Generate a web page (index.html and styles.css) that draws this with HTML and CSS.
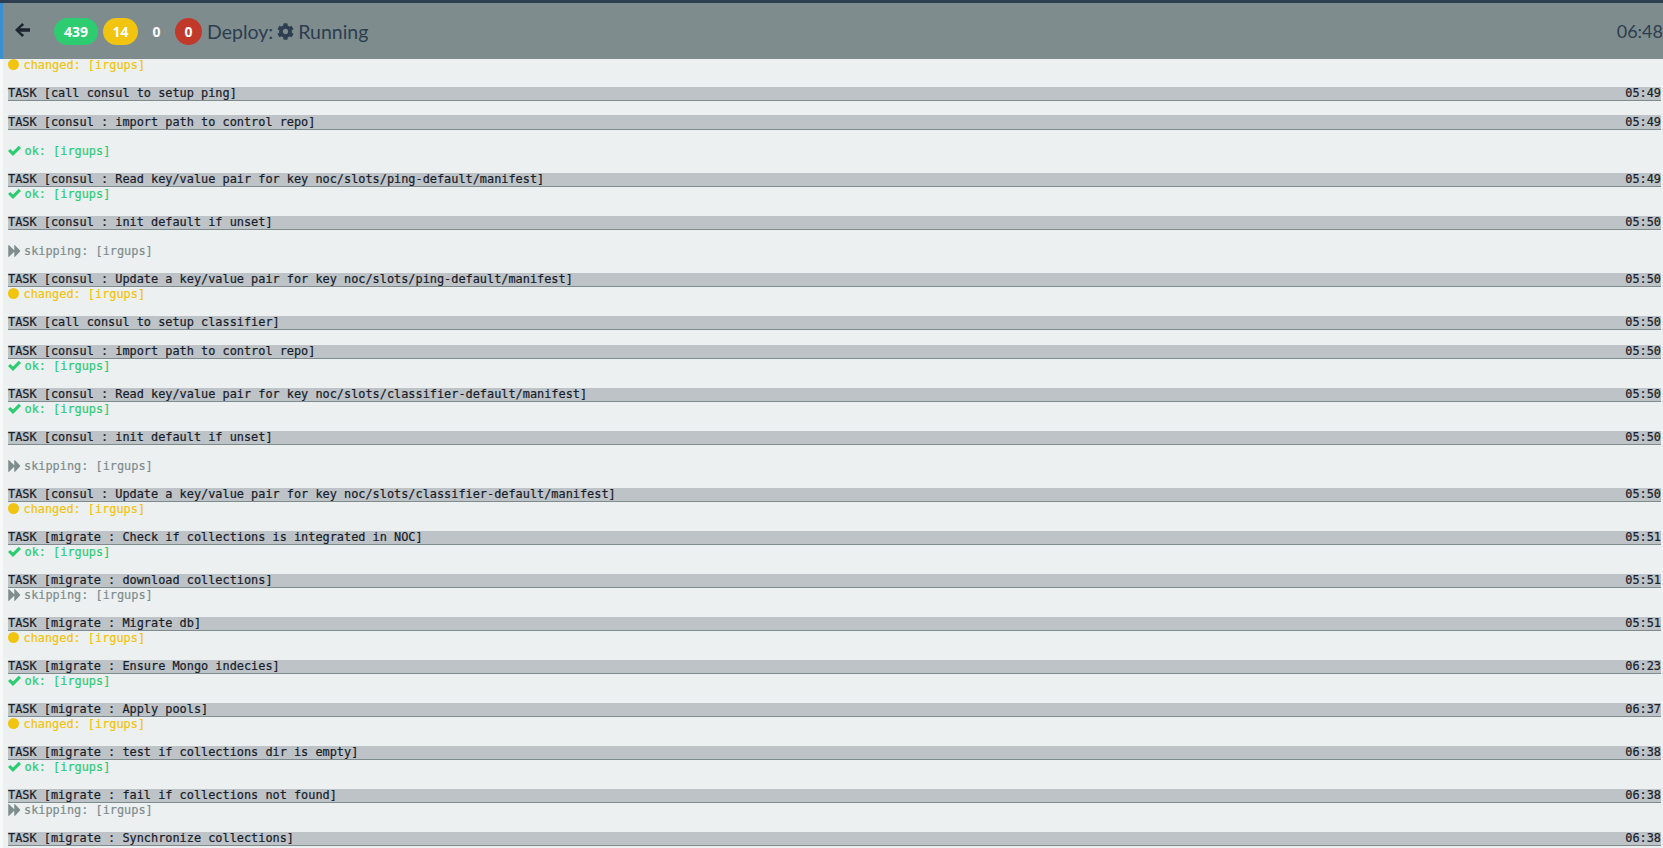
FILE: index.html
```html
<!DOCTYPE html>
<html lang="en">
<head>
<meta charset="utf-8">
<title>Deploy: Running</title>
<link rel="stylesheet" href="styles.css">
</head>
<body>
<svg class="sprite" aria-hidden="true">
<symbol id="i-check" viewBox="0 0 13 11"><path d="M0 6.1 2.2 3.9 5 6.6 10.8.8 13 3 5 11z"/></symbol>
<symbol id="i-forward" viewBox="0 0 12 12"><path d="M0 .6c0-.5.4-.7.8-.4L6 5.2V.6c0-.5.4-.7.8-.4l5 5.3c.3.3.3.7 0 1l-5 5.3c-.4.3-.8.1-.8-.4V6.8L.8 11.8c-.4.3-.8.1-.8-.4z"/></symbol>
</svg>
<header class="topbar">
  <a class="back" href="#" aria-label="Back">
    <svg class="back-icon" viewBox="0 0 15 14"><path d="M7.2 0 9.1 1.9 5 5.2H15V8.8H5L9.1 12.1 7.2 14 0 7z"/></svg>
  </a>
  <div class="badges">
    <span class="badge badge-ok">439</span>
    <span class="badge badge-changed">14</span>
    <span class="badge badge-plain">0</span>
    <span class="badge badge-failed">0</span>
  </div>
  <div class="title">
    <span>Deploy:</span>
    <svg class="gear" viewBox="0 0 512 512"><path d="M487.4 315.7l-42.6-24.6c4.3-23.2 4.3-47 0-70.2l42.6-24.6c4.9-2.8 7.1-8.6 5.5-14-11.1-35.6-30-67.8-54.7-94.6-3.8-4.1-10-5.1-14.8-2.3L380.8 110c-17.9-15.4-38.5-27.3-60.8-35.1V25.8c0-5.6-3.9-10.5-9.4-11.7-36.7-8.2-74.3-7.8-109.2 0-5.5 1.2-9.4 6.1-9.4 11.7V75c-22.2 7.9-42.8 19.8-60.8 35.1L88.7 85.5c-4.9-2.8-11-1.9-14.8 2.3-24.7 26.7-43.6 58.9-54.7 94.6-1.7 5.4.6 11.2 5.5 14L67.3 221c-4.3 23.2-4.3 47 0 70.2l-42.6 24.6c-4.9 2.8-7.1 8.6-5.5 14 11.1 35.6 30 67.8 54.7 94.6 3.8 4.1 10 5.1 14.8 2.3l42.6-24.6c17.9 15.4 38.5 27.3 60.8 35.1v49.2c0 5.6 3.9 10.5 9.4 11.7 36.7 8.2 74.3 7.8 109.2 0 5.5-1.2 9.4-6.1 9.4-11.7v-49.2c22.2-7.9 42.8-19.8 60.8-35.1l42.6 24.6c4.9 2.8 11 1.9 14.8-2.3 24.7-26.7 43.6-58.9 54.7-94.6 1.5-5.5-.7-11.3-5.6-14.1zM256 336c-44.1 0-80-35.9-80-80s35.9-80 80-80 80 35.9 80 80-35.9 80-80 80z"/></svg>
    <span>Running</span>
  </div>
  <time class="clock">06:48</time>
</header>
<main class="log">
  <div class="line changed"><i class="dot"></i>changed: [irgups]</div>
  <div class="line"></div>
  <div class="line task"><span>TASK [call consul to setup ping]</span><span>05:49</span></div>
  <div class="line"></div>
  <div class="line task"><span>TASK [consul : import path to control repo]</span><span>05:49</span></div>
  <div class="line"></div>
  <div class="line ok"><svg class="ico"><use href="#i-check"/></svg>ok: [irgups]</div>
  <div class="line"></div>
  <div class="line task"><span>TASK [consul : Read key/value pair for key noc/slots/ping-default/manifest]</span><span>05:49</span></div>
  <div class="line ok"><svg class="ico"><use href="#i-check"/></svg>ok: [irgups]</div>
  <div class="line"></div>
  <div class="line task"><span>TASK [consul : init default if unset]</span><span>05:50</span></div>
  <div class="line"></div>
  <div class="line skipped"><svg class="ico"><use href="#i-forward"/></svg>skipping: [irgups]</div>
  <div class="line"></div>
  <div class="line task"><span>TASK [consul : Update a key/value pair for key noc/slots/ping-default/manifest]</span><span>05:50</span></div>
  <div class="line changed"><i class="dot"></i>changed: [irgups]</div>
  <div class="line"></div>
  <div class="line task"><span>TASK [call consul to setup classifier]</span><span>05:50</span></div>
  <div class="line"></div>
  <div class="line task"><span>TASK [consul : import path to control repo]</span><span>05:50</span></div>
  <div class="line ok"><svg class="ico"><use href="#i-check"/></svg>ok: [irgups]</div>
  <div class="line"></div>
  <div class="line task"><span>TASK [consul : Read key/value pair for key noc/slots/classifier-default/manifest]</span><span>05:50</span></div>
  <div class="line ok"><svg class="ico"><use href="#i-check"/></svg>ok: [irgups]</div>
  <div class="line"></div>
  <div class="line task"><span>TASK [consul : init default if unset]</span><span>05:50</span></div>
  <div class="line"></div>
  <div class="line skipped"><svg class="ico"><use href="#i-forward"/></svg>skipping: [irgups]</div>
  <div class="line"></div>
  <div class="line task"><span>TASK [consul : Update a key/value pair for key noc/slots/classifier-default/manifest]</span><span>05:50</span></div>
  <div class="line changed"><i class="dot"></i>changed: [irgups]</div>
  <div class="line"></div>
  <div class="line task"><span>TASK [migrate : Check if collections is integrated in NOC]</span><span>05:51</span></div>
  <div class="line ok"><svg class="ico"><use href="#i-check"/></svg>ok: [irgups]</div>
  <div class="line"></div>
  <div class="line task"><span>TASK [migrate : download collections]</span><span>05:51</span></div>
  <div class="line skipped"><svg class="ico"><use href="#i-forward"/></svg>skipping: [irgups]</div>
  <div class="line"></div>
  <div class="line task"><span>TASK [migrate : Migrate db]</span><span>05:51</span></div>
  <div class="line changed"><i class="dot"></i>changed: [irgups]</div>
  <div class="line"></div>
  <div class="line task"><span>TASK [migrate : Ensure Mongo indecies]</span><span>06:23</span></div>
  <div class="line ok"><svg class="ico"><use href="#i-check"/></svg>ok: [irgups]</div>
  <div class="line"></div>
  <div class="line task"><span>TASK [migrate : Apply pools]</span><span>06:37</span></div>
  <div class="line changed"><i class="dot"></i>changed: [irgups]</div>
  <div class="line"></div>
  <div class="line task"><span>TASK [migrate : test if collections dir is empty]</span><span>06:38</span></div>
  <div class="line ok"><svg class="ico"><use href="#i-check"/></svg>ok: [irgups]</div>
  <div class="line"></div>
  <div class="line task"><span>TASK [migrate : fail if collections not found]</span><span>06:38</span></div>
  <div class="line skipped"><svg class="ico"><use href="#i-forward"/></svg>skipping: [irgups]</div>
  <div class="line"></div>
  <div class="line task"><span>TASK [migrate : Synchronize collections]</span><span>06:38</span></div>
</main>
</body>
</html>
```
FILE: styles.css
```css
html, body {
  margin: 0;
  height: 100%;
  overflow: hidden;
}
body {
  display: flex;
  flex-direction: column;
  background: #ecf0f1;
  border-top: 3px solid #2c3e50;
  box-sizing: border-box;
}
.sprite {
  display: none;
}
.topbar {
  flex: none;
  position: relative;
  z-index: 1;
  display: flex;
  align-items: center;
  height: 56px;
  box-sizing: border-box;
  padding-left: 12px;
  background: #7f8c8d;
  border-left: 3px solid #3a8fd0;
  color: #2c3e50;
  font-family: Lato, sans-serif;
  font-size: 19.5px;
}
.back {
  display: flex;
  color: #1c2530;
  margin-top: -2px;
}
.back-icon {
  width: 15px;
  height: 14px;
  fill: currentColor;
}
.badges {
  display: flex;
  margin-left: 24px;
}
.badge {
  height: 27px;
  line-height: 27px;
  border-radius: 14px;
  margin-right: 5px;
  color: #fff;
  font-family: "Open Sans", sans-serif;
  font-size: 14px;
  font-weight: 700;
  text-align: center;
}
.badge-ok { background: #2ecc71; width: 44px; }
.badge-changed { background: #f1c40f; width: 35px; }
.badge-plain { width: 27px; }
.badge-failed { background: #c0392b; width: 27px; }
.title {
  display: flex;
  align-items: center;
  gap: 4px;
}
.gear {
  width: 17px;
  height: 17px;
  fill: #2c3e50;
}
.clock {
  margin-left: auto;
  font-size: 18px;
}
.log {
  flex: 1;
  min-height: 0;
  margin-top: -1px;
  overflow: hidden;
  box-sizing: border-box;
  padding: 0 2px 0 5px;
  border-left: 3px solid #f7f8f8;
  font-family: "DejaVu Sans Mono", monospace;
  font-size: 11.88px;
  line-height: 14.34px;
  -webkit-text-stroke: 0.2px;
}
.line {
  height: 14.34px;
  white-space: pre;
  display: flex;
  align-items: center;
}
.task {
  justify-content: space-between;
  box-sizing: border-box;
  background: #bdc3c7;
  border-bottom: 1px solid #7f8c8d;
  color: #17202a;
}
.changed { color: #f1c40f; }
.ok { color: #2ecc71; }
.skipped { color: #7f8c8d; }
.dot {
  width: 11px;
  height: 11px;
  border-radius: 50%;
  background: #f1c40f;
  margin-right: 4.5px;
  margin-top: -1px;
  flex: none;
}
.ico {
  width: 13px;
  height: 11px;
  margin-right: 3.5px;
  flex: none;
  fill: currentColor;
  margin-top: -1px;
}
.skipped .ico {
  width: 12.5px;
  height: 12px;
}
```
